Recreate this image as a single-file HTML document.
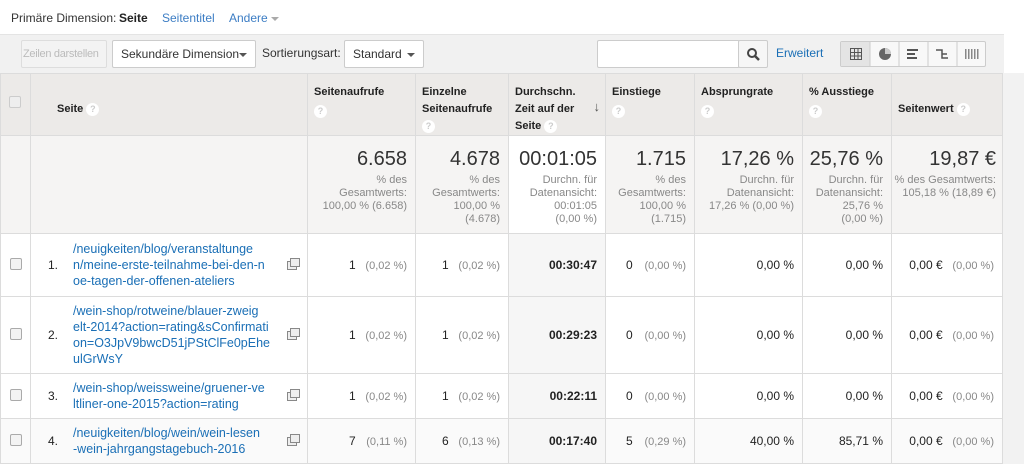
<!DOCTYPE html>
<html><head><meta charset="utf-8">
<style>
*{box-sizing:border-box;margin:0;padding:0}
body{width:1024px;height:464px;overflow:hidden;background:#fff;font-family:"Liberation Sans",sans-serif;color:#222;position:relative}
.top{position:absolute;left:0;top:0;width:1024px;height:34px;background:#fff;font-size:12px}
.top span{position:absolute;top:11px}
.bar{position:absolute;left:0;top:34px;width:1004px;height:39px;background:#f1f1f1;border-top:1px solid #e4e4e4}
.btn{position:absolute;height:28px;top:5px;border:1px solid #ccc;border-radius:2px;background:#fff;font-size:12px;line-height:26px;padding-left:8px;color:#333;white-space:nowrap;overflow:hidden}
.caret{position:absolute;right:8px;top:12px;width:0;height:0;border-left:4px solid transparent;border-right:4px solid transparent;border-top:4px solid #555}
table{position:absolute;left:0;top:73px;border-collapse:collapse;table-layout:fixed;width:1002px;font-size:12px}
td,th{border:1px solid #dcdcdc;vertical-align:middle}
th{background:#eceae8;font-weight:bold;font-size:11px;text-align:left;vertical-align:top;padding:10px 6px 0 6px;line-height:17px;color:#222}
.q{display:inline-block;width:13px;height:13px;border-radius:50%;background:#fff;color:#ccc;font-size:9px;text-align:center;line-height:13px;font-weight:bold;vertical-align:middle}
.sum td{background:#f5f4f3;text-align:right;vertical-align:top;padding:12px 8px 0 2px;color:#888;font-size:11px;line-height:13px}
.sum .big{font-size:20px;color:#333;line-height:22px;margin-bottom:4px;display:block;white-space:nowrap}
.row td{background:#fff;text-align:right;padding:0 8px;font-size:12px;color:#222;white-space:nowrap}
.row td.s{background:#f6f6f6;font-weight:bold}
.p{color:#888;font-size:11px;display:inline-block;width:48px;text-align:right}
.cb{display:inline-block;width:12px;height:12px;border:1px solid #aaa;border-radius:2px;background:#f3f3f3}
.link{color:#1a6fb6;text-align:left;font-size:12.5px;line-height:16px;white-space:nowrap;margin-left:42px}
.ic{position:absolute;right:10px;width:10px;height:9px;border:1px solid #888;background:#eee}
.ic:before{content:"";position:absolute;left:2px;top:-4px;width:8px;height:7px;border:1px solid #888;background:#eee}
</style></head><body>
<div class="top">
<span style="left:11px;color:#333">Primäre Dimension:</span>
<span style="left:119px;font-weight:bold">Seite</span>
<span style="left:162px;color:#3c7dc4">Seitentitel</span>
<span style="left:229px;color:#3c7dc4">Andere <span style="position:static;display:inline-block;border-left:4px solid transparent;border-right:4px solid transparent;border-top:4px solid #aaa;vertical-align:middle"></span></span>
</div>
<div class="bar">
<div class="btn" style="left:21px;width:86px;color:#bbb;background:#f3f3f3;border-color:#ddd;padding-left:1px;font-size:11px;letter-spacing:-0.3px">Zeilen darstellen</div>
<div class="btn" style="left:112px;width:144px">Sekundäre Dimension<span class="caret"></span></div>
<span style="position:absolute;left:262px;top:11px;font-size:12px;color:#333">Sortierungsart:</span>
<div class="btn" style="left:344px;width:80px">Standard<span class="caret"></span></div>
<div class="btn" style="left:597px;width:143px;padding:0"></div>
<div class="btn" style="left:738px;width:30px;padding:0;background:#f6f6f6"><svg width="28" height="26"><circle cx="13" cy="12" r="4" fill="none" stroke="#444" stroke-width="2"/><line x1="16" y1="15" x2="20" y2="19" stroke="#444" stroke-width="2.5"/></svg></div>
<span style="position:absolute;left:776px;top:11px;font-size:12px;color:#1a6fb6">Erweitert</span>
<div class="btn" style="left:840px;width:146px;padding:0;background:#f8f8f8;border-color:#ccc;top:6px;height:26px">
<svg width="146" height="24" style="position:absolute;left:0;top:0">
<rect x="0" y="0" width="29" height="24" fill="#e4e4e4"/>
<line x1="29" y1="0" x2="29" y2="24" stroke="#ccc"/><line x1="58" y1="0" x2="58" y2="24" stroke="#ccc"/><line x1="87" y1="0" x2="87" y2="24" stroke="#ccc"/><line x1="116" y1="0" x2="116" y2="24" stroke="#ccc"/>
<g stroke="#555" fill="none"><rect x="9.5" y="6.5" width="11" height="11"/><line x1="13.5" y1="6" x2="13.5" y2="18"/><line x1="17" y1="6" x2="17" y2="18"/><line x1="9" y1="10.5" x2="21" y2="10.5"/><line x1="9" y1="14" x2="21" y2="14"/></g>
<circle cx="44" cy="12" r="6" fill="#666"/><path d="M44 12V6A6 6 0 0 1 50 12Z" fill="#ccc"/>
<g fill="#555"><rect x="66" y="7" width="11" height="2"/><rect x="66" y="11" width="8" height="2"/><rect x="66" y="15" width="10" height="2"/></g>
<g stroke="#555" stroke-width="1.5" fill="none"><path d="M95 8h6v8h6M101 12h5"/></g>
<g fill="#888"><rect x="124" y="7" width="1.5" height="10"/><rect x="127" y="7" width="1.5" height="10"/><rect x="130" y="7" width="1.5" height="10"/><rect x="133" y="7" width="1.5" height="10"/><rect x="136" y="7" width="1.5" height="10"/></g>
</svg></div>
</div>
<div style="position:absolute;left:1002px;top:73px;width:22px;height:391px;background:#f2f2f2"></div>
<table>
<colgroup><col style="width:30px"><col style="width:277px"><col style="width:108px"><col style="width:93px"><col style="width:97px"><col style="width:89px"><col style="width:108px"><col style="width:89px"><col style="width:111px"></colgroup>
<tr style="height:62px">
<th style="vertical-align:middle;padding:0 8px"><span class="cb" style="background:#eee;border-color:#ccc"></span></th>
<th style="vertical-align:middle;padding-left:26px">Seite <span class="q">?</span></th>
<th>Seitenaufrufe<br><span class="q" style="margin-top:4px">?</span></th>
<th>Einzelne Seitenaufrufe<br><span class="q">?</span></th>
<th style="position:relative;padding-right:18px">Durchschn. Zeit auf der Seite <span class="q">?</span><span style="position:absolute;right:5px;top:24px;font-size:13px;color:#555">↓</span></th>
<th>Einstiege<br><span class="q" style="margin-top:4px">?</span></th>
<th>Absprungrate<br><span class="q" style="margin-top:4px">?</span></th>
<th>% Ausstiege<br><span class="q" style="margin-top:4px">?</span></th>
<th style="vertical-align:middle">Seitenwert <span class="q">?</span></th>
</tr>
<tr class="sum" style="height:98px">
<td></td><td></td>
<td><span class="big">6.658</span>% des<br>Gesamtwerts:<br>100,00 % (6.658)</td>
<td><span class="big">4.678</span>% des<br>Gesamtwerts:<br>100,00 %<br>(4.678)</td>
<td style="background:#fff"><span class="big">00:01:05</span>Durchn. für<br>Datenansicht:<br>00:01:05<br>(0,00 %)</td>
<td><span class="big">1.715</span>% des<br>Gesamtwerts:<br>100,00 %<br>(1.715)</td>
<td><span class="big">17,26 %</span>Durchn. für<br>Datenansicht:<br>17,26 % (0,00 %)</td>
<td><span class="big">25,76 %</span>Durchn. für<br>Datenansicht:<br>25,76 %<br>(0,00 %)</td>
<td style="padding-right:6px"><span class="big">19,87 €</span>% des Gesamtwerts:<br>105,18 % (18,89 €)</td>
</tr>
<tr class="row" style="height:63px">
<td style="text-align:center;padding:0"><span class="cb"></span></td>
<td style="position:relative;text-align:left;padding:0"><span style="position:absolute;left:17px;top:24px">1.</span><div class="link">/neuigkeiten/blog/veranstaltunge<br>n/meine-erste-teilnahme-bei-den-n<br>oe-tagen-der-offenen-ateliers</div><span class="ic" style="top:27px"></span></td>
<td>1 <span class="p">(0,02 %)</span></td><td>1 <span class="p">(0,02 %)</span></td><td class="s">00:30:47</td>
<td style="text-align:left;padding-left:20px">0 <span class="p" style="width:50px">(0,00 %)</span></td><td>0,00 %</td><td>0,00 %</td><td>0,00 € <span class="p">(0,00 %)</span></td>
</tr>
<tr class="row" style="height:77px">
<td style="text-align:center;padding:0"><span class="cb"></span></td>
<td style="position:relative;text-align:left;padding:0"><span style="position:absolute;left:17px;top:31px">2.</span><div class="link">/wein-shop/rotweine/blauer-zweig<br>elt-2014?action=rating&amp;sConfirmati<br>on=O3JpV9bwcD51jPStClFe0pEhe<br>ulGrWsY</div><span class="ic" style="top:34px"></span></td>
<td>1 <span class="p">(0,02 %)</span></td><td>1 <span class="p">(0,02 %)</span></td><td class="s">00:29:23</td>
<td style="text-align:left;padding-left:20px">0 <span class="p" style="width:50px">(0,00 %)</span></td><td>0,00 %</td><td>0,00 %</td><td>0,00 € <span class="p">(0,00 %)</span></td>
</tr>
<tr class="row" style="height:45px">
<td style="text-align:center;padding:0"><span class="cb"></span></td>
<td style="position:relative;text-align:left;padding:0"><span style="position:absolute;left:17px;top:15px">3.</span><div class="link">/wein-shop/weissweine/gruener-ve<br>ltliner-one-2015?action=rating</div><span class="ic" style="top:18px"></span></td>
<td>1 <span class="p">(0,02 %)</span></td><td>1 <span class="p">(0,02 %)</span></td><td class="s">00:22:11</td>
<td style="text-align:left;padding-left:20px">0 <span class="p" style="width:50px">(0,00 %)</span></td><td>0,00 %</td><td>0,00 %</td><td>0,00 € <span class="p">(0,00 %)</span></td>
</tr>
<tr class="row" style="height:45px">
<td style="text-align:center;padding:0;background:#fafafa"><span class="cb"></span></td>
<td style="position:relative;text-align:left;padding:0;background:#fafafa"><span style="position:absolute;left:17px;top:15px">4.</span><div class="link">/neuigkeiten/blog/wein/wein-lesen<br>-wein-jahrgangstagebuch-2016</div><span class="ic" style="top:18px"></span></td>
<td style="background:#fafafa">7 <span class="p">(0,11 %)</span></td><td style="background:#fafafa">6 <span class="p">(0,13 %)</span></td><td class="s">00:17:40</td>
<td style="text-align:left;padding-left:20px;background:#fafafa">5 <span class="p" style="width:50px">(0,29 %)</span></td><td style="background:#fafafa">40,00 %</td><td style="background:#fafafa">85,71 %</td><td style="background:#fafafa">0,00 € <span class="p">(0,00 %)</span></td>
</tr>
</table>
</body></html>
